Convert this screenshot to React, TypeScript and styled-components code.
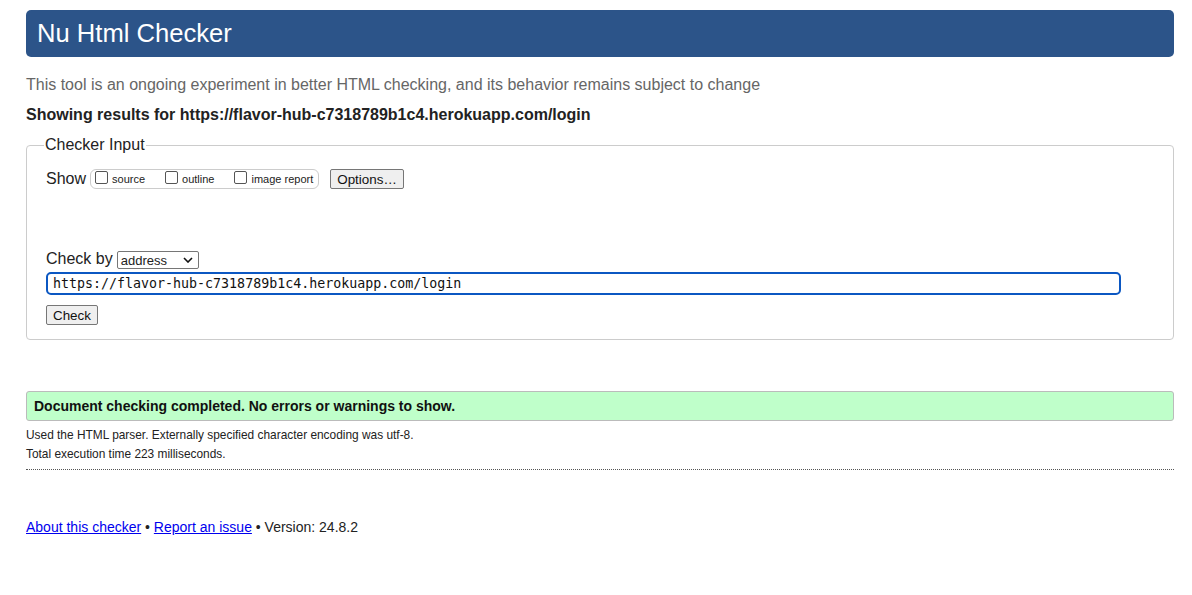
import styled, { createGlobalStyle } from "styled-components";

const GlobalStyle = createGlobalStyle`
  body {
    margin: 0;
    background: #fff;
    font-family: "Liberation Sans", Arial, sans-serif;
    color: #222;
  }
`;

const Page = styled.div`
  padding: 10px 18px 40px 26px;
`;

const Header = styled.h1`
  margin: 0;
  background: #2c5489;
  color: #fff;
  border-radius: 5px;
  height: 47px;
  display: flex;
  align-items: center;
  padding: 0 11px;
  font-size: 25.6px;
  font-weight: normal;
`;

const Intro = styled.p`
  margin: 19px 0 0;
  color: #666;
  font-size: 16px;
  line-height: 18px;
`;

const ResultsFor = styled.p`
  margin: 12px 0 0;
  font-weight: bold;
  font-size: 16px;
  line-height: 18px;
  color: #222;
`;

const Fieldset = styled.fieldset`
  margin: 12px 0 0;
  border: 1px solid #ccc;
  border-radius: 4px;
  padding: 15px 19px 14px 19px;
  min-width: 0;
`;

const Legend = styled.legend`
  font-size: 16px;
  padding: 0 1px;
  margin-left: -2px;
  color: #222;
`;

const Row = styled.div`
  display: flex;
  align-items: center;
  gap: 4px;
  font-size: 16px;
`;

const CheckGroup = styled.span`
  display: inline-flex;
  align-items: center;
  gap: 20px;
  border: 1px solid #ccc;
  border-radius: 6px;
  padding: 0 5px 0 4px;
  height: 18px;
  font-size: 11px;
  margin-right: 7px;
`;

const Label = styled.label`
  display: inline-flex;
  align-items: center;
`;

const Box = styled.span`
  display: inline-block;
  width: 11px;
  height: 11px;
  border: 1px solid #555;
  border-radius: 2px;
  margin-right: 4px;
  margin-top: -4px;
`;

const Btn = styled.button`
  font-family: "Liberation Sans", Arial, sans-serif;
  font-size: 13.4px;
  background: #efefef;
  border: 1px solid #767676;
  border-radius: 2px;
  padding: 0 6px;
  height: 20px;
  color: #111;
`;

const Spacer = styled.div`
  height: 60px;
`;

const Select = styled.span`
  display: inline-flex;
  align-items: center;
  justify-content: space-between;
  width: 82px;
  height: 18px;
  border: 1px solid #767676;
  border-radius: 2px;
  font-size: 13px;
  padding: 0 5px 0 3px;
  box-sizing: border-box;
  margin-top: 2px;
`;

const UrlInput = styled.div`
  margin-top: 3px;
  width: 1075px;
  height: 23px;
  box-sizing: border-box;
  border: 2px solid #0b57c2;
  border-radius: 5px;
  font-family: "DejaVu Sans Mono", monospace;
  font-size: 13.3px;
  display: flex;
  align-items: center;
  padding-left: 5px;
  color: #111;
`;

const CheckRow = styled.div`
  margin-top: 10px;
`;

const Success = styled.div`
  margin-top: 51px;
  background: #bfffca;
  border: 1px solid #bbb;
  border-radius: 3px;
  height: 28px;
  display: flex;
  align-items: center;
  padding-left: 7px;
  font-weight: bold;
  font-size: 14px;
  color: #111;
`;

const Detail = styled.p`
  margin: 0;
  font-size: 11.9px;
  line-height: 19px;
  color: #222;
`;

const Details = styled.div`
  margin-top: 5px;
  padding-bottom: 5px;
  border-bottom: 1px dotted #555;
`;

const Footer = styled.p`
  margin: 49px 0 0;
  font-size: 14px;
  color: #222;
  a {
    color: #0000ee;
  }
`;

const Chevron = () => (
  <svg width="10" height="6" viewBox="0 0 10 6">
    <path d="M1 1l4 4 4-4" fill="none" stroke="#111" strokeWidth="1.6" />
  </svg>
);

export default function App() {
  return (
    <>
      <GlobalStyle />
      <Page>
        <Header>Nu Html Checker</Header>
        <Intro>
          This tool is an ongoing experiment in better HTML checking, and its behavior remains subject to change
        </Intro>
        <ResultsFor>Showing results for https://flavor-hub-c7318789b1c4.herokuapp.com/login</ResultsFor>
        <Fieldset>
          <Legend>Checker Input</Legend>
          <Row>
            Show
            <CheckGroup>
              <Label>
                <Box />
                source
              </Label>
              <Label>
                <Box />
                outline
              </Label>
              <Label>
                <Box />
                image report
              </Label>
            </CheckGroup>
            <Btn>Options…</Btn>
          </Row>
          <Spacer />
          <Row>
            Check by
            <Select>
              address
              <Chevron />
            </Select>
          </Row>
          <UrlInput>https://flavor-hub-c7318789b1c4.herokuapp.com/login</UrlInput>
          <CheckRow>
            <Btn>Check</Btn>
          </CheckRow>
        </Fieldset>
        <Success>Document checking completed. No errors or warnings to show.</Success>
        <Details>
          <Detail>Used the HTML parser. Externally specified character encoding was utf-8.</Detail>
          <Detail>Total execution time 223 milliseconds.</Detail>
        </Details>
        <Footer>
          <a href="#">About this checker</a> • <a href="#">Report an issue</a> • Version: 24.8.2
        </Footer>
      </Page>
    </>
  );
}
